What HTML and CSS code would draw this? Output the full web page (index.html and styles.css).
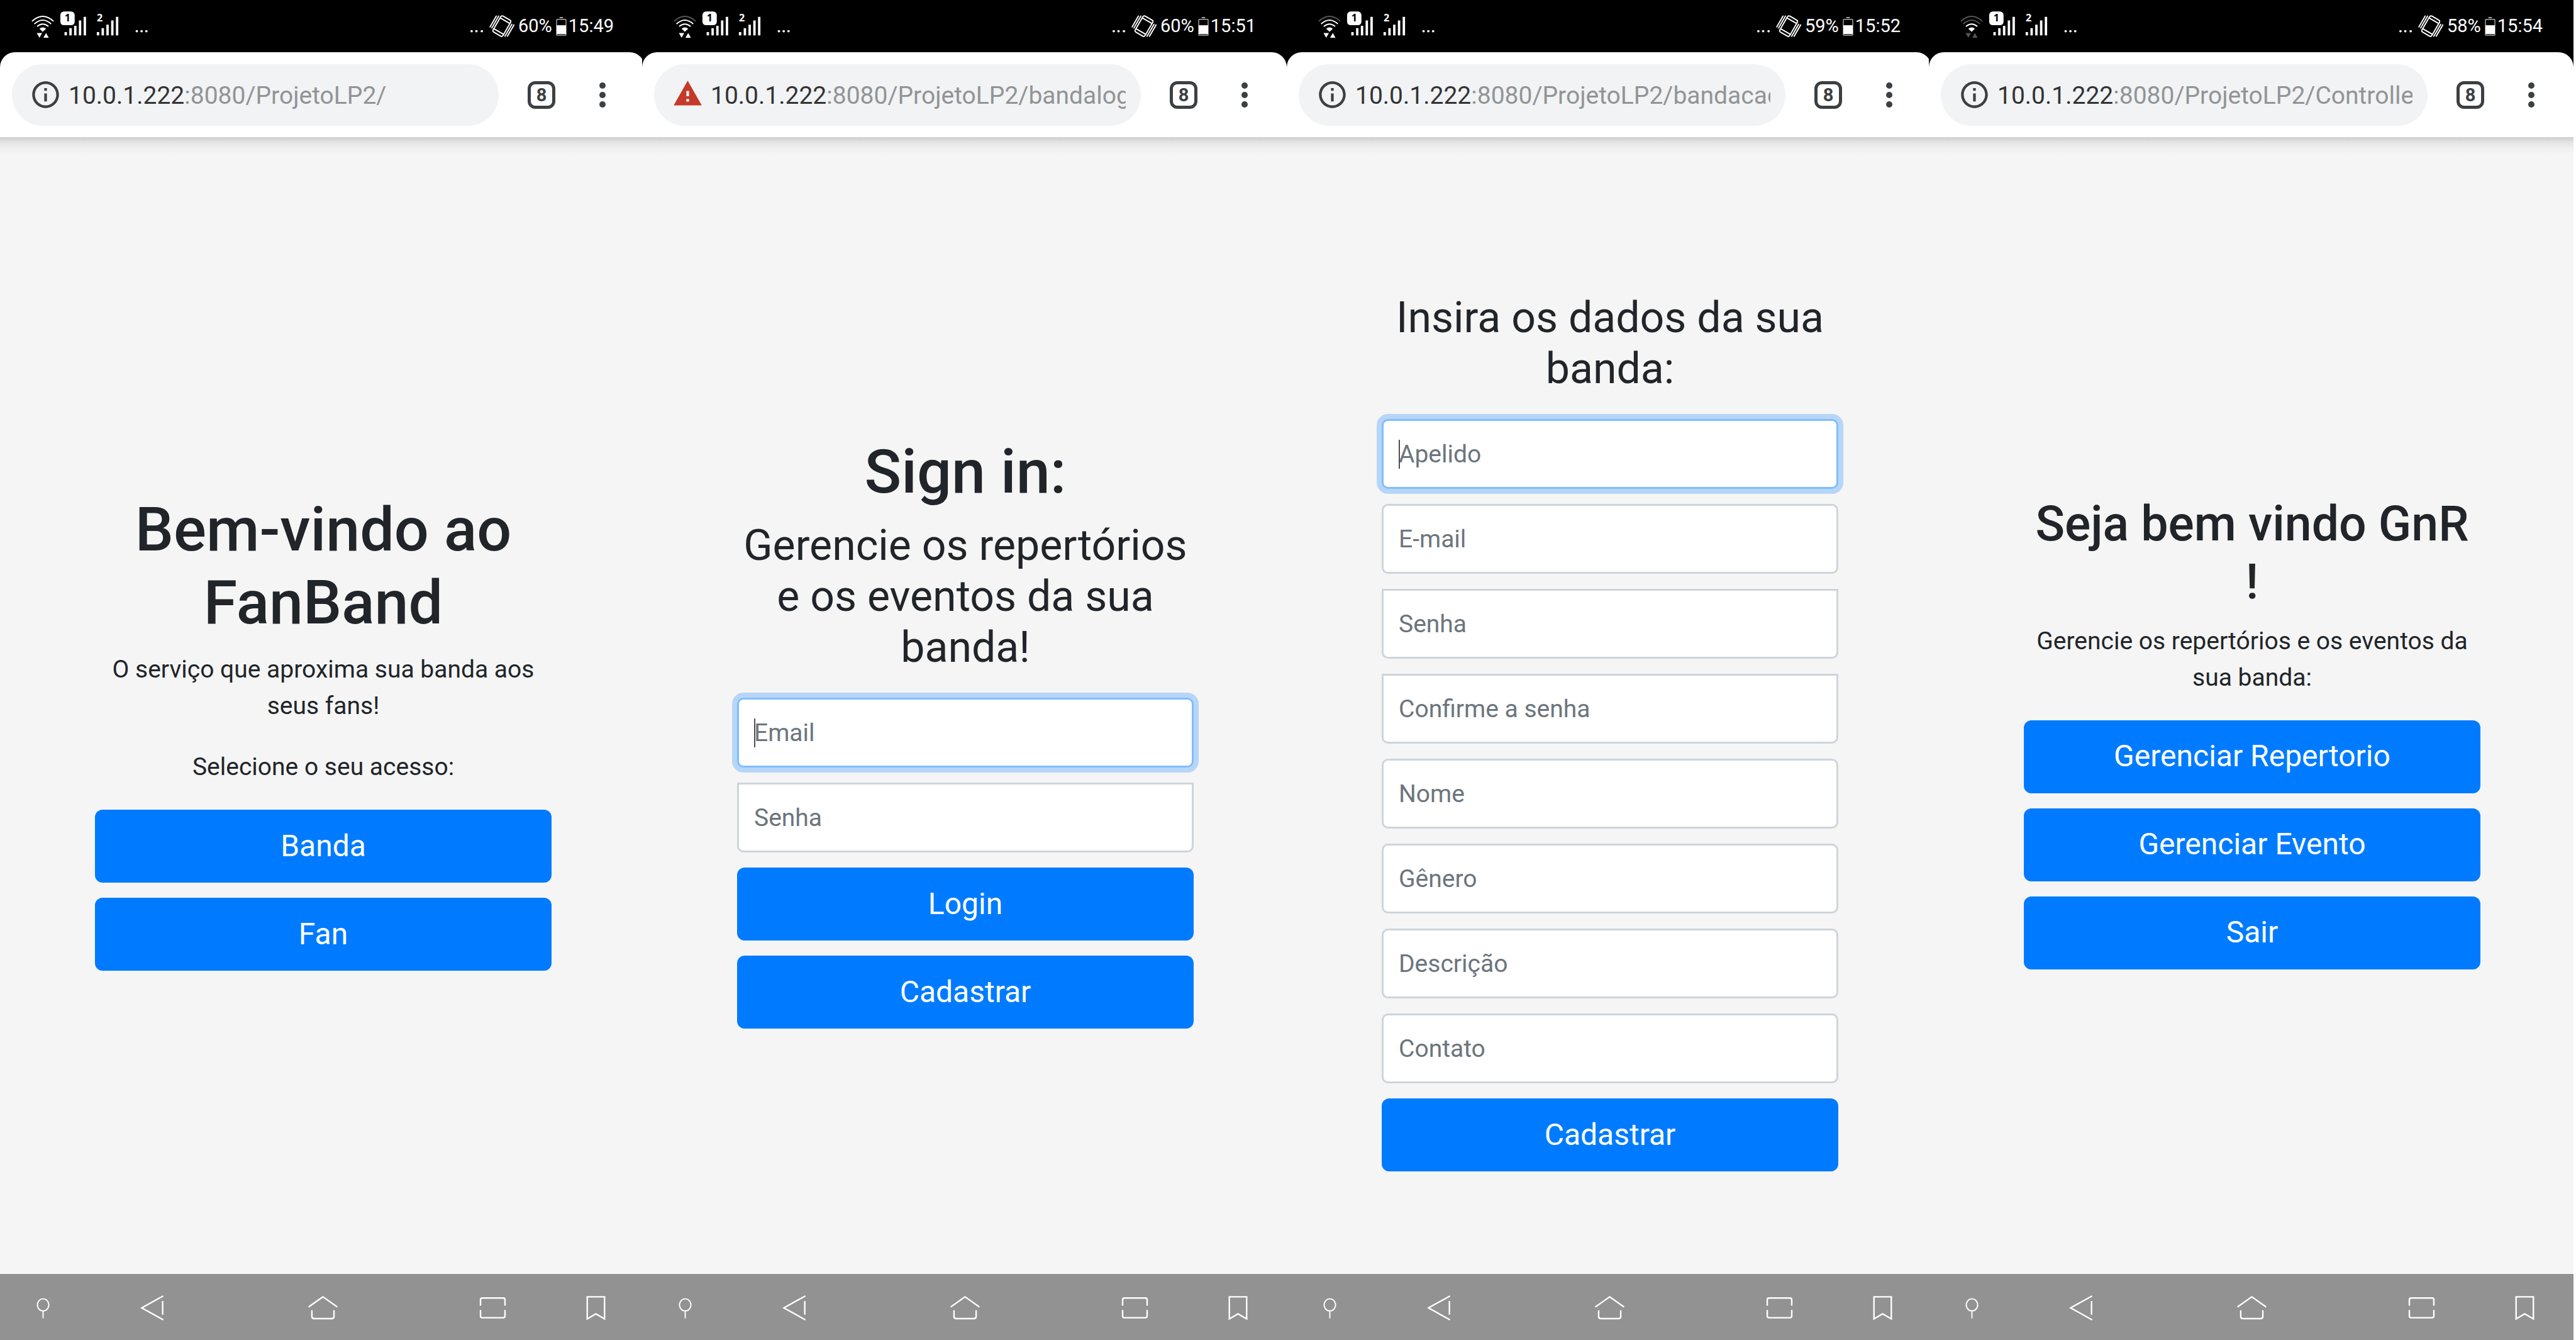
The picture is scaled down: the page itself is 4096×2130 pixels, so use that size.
FILE: index.html
```html
<!DOCTYPE html>
<html lang="pt-BR">
<head>
<meta charset="utf-8">
<title>FanBand</title>
<link rel="stylesheet" href="styles.css">
</head>
<body>
<svg class="sprite" aria-hidden="true">
  <symbol id="signals" viewBox="0 0 260 87">
    <g fill="#fff">
      <rect x="101" y="19" width="24" height="23" rx="6"/>
      <path d="M108 53.5h4V59h-4zM116 47h4v12h-4zM124 43h4v16h-4zM132 34h4v25h-4zM140 28h4v31h-4z"/>
      <path d="M162 53.5h4V59h-4zM170 47h4v12h-4zM178 41h4v18h-4zM186 34h4v25h-4zM194 28h4v31h-4z"/>
      <circle cx="229" cy="52" r="2"/><circle cx="237" cy="52" r="2"/><circle cx="245" cy="52" r="2"/>
    </g>
    <text x="113" y="36" class="sim" fill="#000">1</text>
    <text x="167" y="36" class="sim" fill="#fff">2</text>
  </symbol>
  <symbol id="wifi" viewBox="0 0 44 87">
    <g fill="none" stroke="#fff" stroke-width="2">
      <path class="arc-4" d="M10 35.500Q28 19 46 35.500" transform="translate(-6)"/>
      <path class="arc-3" d="M8 40q14-13 28 0"/>
      <path d="M12.500 44q9.500-8 19 0"/>
    </g>
    <path fill="#fff" d="M16.500 48q5.500-5 11 0L22 53z"/>
    <path class="arrows" d="M12 55h9l-4.500 8zM23 63h9l-4.500-8z"/>
  </symbol>
  <symbol id="more" viewBox="0 0 24 87">
    <g fill="#fff"><circle cx="3" cy="52" r="2"/><circle cx="11" cy="52" r="2"/><circle cx="20" cy="52" r="2"/></g>
  </symbol>
  <symbol id="vibrate" viewBox="0 0 42 40">
    <g transform="translate(21 19.500) rotate(30)" fill="none" stroke="#fff" stroke-width="2" stroke-linecap="round">
      <rect x="-9.500" y="-15.500" width="19" height="31" rx="3"/>
      <path d="M-9.500-10.500h19M-9.500 10.500h19M-13-12v23M-16.500-10v21M13-11v23M16.500-12v22"/>
    </g>
  </symbol>
  <symbol id="battery" viewBox="0 0 18 32">
    <path fill="#aaa" d="M6 0h6v2H6z"/>
    <rect x="1" y="4" width="16" height="27" rx="1" fill="none" stroke="#aaa" stroke-width="1.500"/>
    <path fill="#fff" d="M1 14h16v15H1z"/>
  </symbol>
  <symbol id="info" viewBox="0 0 24 24">
    <path d="M11 7h2v2h-2zm0 4h2v6h-2zm1-9C6.480 2 2 6.480 2 12s4.480 10 10 10 10-4.480 10-10S17.520 2 12 2zm0 18c-4.410 0-8-3.590-8-8s3.590-8 8-8 8 3.590 8 8-3.590 8-8 8z" fill="#3c4043"/>
  </symbol>
  <symbol id="warning" viewBox="0 0 24 24">
    <path fill="#c53929" d="M1.500 20h21L12 1.500z"/>
    <path fill="#f1f3f4" d="M11 9.200h2v4h-2zM11 15.200h2v2h-2z"/>
  </symbol>
  <symbol id="dots" viewBox="0 0 12 42">
    <g fill="#3c4043"><circle cx="6" cy="6" r="5"/><circle cx="6" cy="21" r="5"/><circle cx="6" cy="36" r="5"/></g>
  </symbol>
  <symbol id="pin" viewBox="0 0 60 110">
    <path fill="none" stroke="#fff" stroke-width="2" d="M30 41.500a9.500 10 0 1 0 .1 0zM30 62v12"/>
  </symbol>
  <symbol id="back" viewBox="0 0 60 110">
    <path fill="none" stroke="#fff" stroke-width="2.500" d="M48 36.500L12 56.500l36 20M47 45v23"/>
  </symbol>
  <symbol id="home" viewBox="0 0 60 110">
    <path fill="none" stroke="#fff" stroke-width="2.500" d="M6 55l24-17 24 17M11.500 60.500V71q0 3.500 4 3.500h29q4 0 4-3.500V60.500"/>
  </symbol>
  <symbol id="recents" viewBox="0 0 60 110">
    <path fill="none" stroke="#fff" stroke-width="2.500" d="M9.500 53V43q0-3 3-3h35q3 0 3 3v10M9.500 60v10q0 3 3 3h35q3 0 3-3V60"/>
  </symbol>
  <symbol id="bookmark" viewBox="0 0 60 110">
    <path fill="none" stroke="#fff" stroke-width="2.500" d="M15.500 38h29v37L30 66.500 15.500 75z"/>
  </symbol>
</svg>

<main class="gallery">
  <section class="phone phone--cropped">
    <div class="screen">
      <header class="status">
        <svg class="wifi"><use href="#wifi"/></svg><svg class="signals"><use href="#signals"/></svg>
        <div class="status-end"><svg class="more"><use href="#more"/></svg><svg class="vibrate"><use href="#vibrate"/></svg><span class="percent">60%</span><svg class="battery"><use href="#battery"/></svg><time>15:49</time></div>
      </header>
      <div class="toolbar-back"><div class="toolbar">
        <div class="address"><svg class="site-icon"><use href="#info"/></svg><span class="url">10.0.1.222<span class="path">:8080/ProjetoLP2/</span></span></div>
        <button class="tabs" type="button" aria-label="Abas">8</button>
        <button class="menu" type="button" aria-label="Menu"><svg><use href="#dots"/></svg></button>
      </div></div>
      <div class="page">
        <h1>Bem-vindo ao FanBand</h1>
        <p>O serviço que aproxima sua banda aos seus fans!</p>
        <p>Selecione o seu acesso:</p>
        <div class="stack">
          <button class="btn" type="button">Banda</button>
          <button class="btn" type="button">Fan</button>
        </div>
      </div>
      <nav class="navbar">
        <button type="button" aria-label="Fixar"><svg><use href="#pin"/></svg></button>
        <button type="button" aria-label="Voltar"><svg><use href="#back"/></svg></button>
        <button type="button" aria-label="Início"><svg><use href="#home"/></svg></button>
        <button type="button" aria-label="Recentes"><svg><use href="#recents"/></svg></button>
        <button type="button" aria-label="Favoritos"><svg><use href="#bookmark"/></svg></button>
      </nav>
    </div>
  </section>

  <section class="phone">
    <div class="screen">
      <header class="status">
        <svg class="wifi wifi--good"><use href="#wifi"/></svg><svg class="signals"><use href="#signals"/></svg>
        <div class="status-end"><svg class="more"><use href="#more"/></svg><svg class="vibrate"><use href="#vibrate"/></svg><span class="percent">60%</span><svg class="battery"><use href="#battery"/></svg><time>15:51</time></div>
      </header>
      <div class="toolbar-back"><div class="toolbar">
        <div class="address"><svg class="site-icon"><use href="#warning"/></svg><span class="url">10.0.1.222<span class="path">:8080/ProjetoLP2/bandalog</span></span></div>
        <button class="tabs" type="button" aria-label="Abas">8</button>
        <button class="menu" type="button" aria-label="Menu"><svg><use href="#dots"/></svg></button>
      </div></div>
      <form class="page">
        <h1>Sign in:</h1>
        <h3>Gerencie os repertórios e os eventos da sua banda!</h3>
        <div class="stack">
          <div class="field field--focus"><input type="email" placeholder="Email" aria-label="Email"><span class="caret"></span></div>
          <div class="field"><input type="password" placeholder="Senha" aria-label="Senha"></div>
          <button class="btn" type="button">Login</button>
          <button class="btn" type="button">Cadastrar</button>
        </div>
      </form>
      <nav class="navbar">
        <button type="button" aria-label="Fixar"><svg><use href="#pin"/></svg></button>
        <button type="button" aria-label="Voltar"><svg><use href="#back"/></svg></button>
        <button type="button" aria-label="Início"><svg><use href="#home"/></svg></button>
        <button type="button" aria-label="Recentes"><svg><use href="#recents"/></svg></button>
        <button type="button" aria-label="Favoritos"><svg><use href="#bookmark"/></svg></button>
      </nav>
    </div>
  </section>

  <section class="phone phone--cropped">
    <div class="screen">
      <header class="status">
        <svg class="wifi wifi--good"><use href="#wifi"/></svg><svg class="signals"><use href="#signals"/></svg>
        <div class="status-end"><svg class="more"><use href="#more"/></svg><svg class="vibrate"><use href="#vibrate"/></svg><span class="percent">59%</span><svg class="battery"><use href="#battery"/></svg><time>15:52</time></div>
      </header>
      <div class="toolbar-back"><div class="toolbar">
        <div class="address"><svg class="site-icon"><use href="#info"/></svg><span class="url">10.0.1.222<span class="path">:8080/ProjetoLP2/bandacad</span></span></div>
        <button class="tabs" type="button" aria-label="Abas">8</button>
        <button class="menu" type="button" aria-label="Menu"><svg><use href="#dots"/></svg></button>
      </div></div>
      <form class="page">
        <h3>Insira os dados da sua banda:</h3>
        <div class="stack">
          <div class="field field--focus"><input type="text" placeholder="Apelido" aria-label="Apelido"><span class="caret"></span></div>
          <div class="field"><input type="email" placeholder="E-mail" aria-label="E-mail"></div>
          <div class="field"><input type="password" placeholder="Senha" aria-label="Senha"></div>
          <div class="field"><input type="password" placeholder="Confirme a senha" aria-label="Confirme a senha"></div>
          <div class="field"><input type="text" placeholder="Nome" aria-label="Nome"></div>
          <div class="field"><input type="text" placeholder="Gênero" aria-label="Gênero"></div>
          <div class="field"><input type="text" placeholder="Descrição" aria-label="Descrição"></div>
          <div class="field"><input type="text" placeholder="Contato" aria-label="Contato"></div>
          <button class="btn" type="button">Cadastrar</button>
        </div>
      </form>
      <nav class="navbar">
        <button type="button" aria-label="Fixar"><svg><use href="#pin"/></svg></button>
        <button type="button" aria-label="Voltar"><svg><use href="#back"/></svg></button>
        <button type="button" aria-label="Início"><svg><use href="#home"/></svg></button>
        <button type="button" aria-label="Recentes"><svg><use href="#recents"/></svg></button>
        <button type="button" aria-label="Favoritos"><svg><use href="#bookmark"/></svg></button>
      </nav>
    </div>
  </section>

  <section class="phone">
    <div class="screen">
      <header class="status">
        <svg class="wifi wifi--good wifi--idle"><use href="#wifi"/></svg><svg class="signals"><use href="#signals"/></svg>
        <div class="status-end"><svg class="more"><use href="#more"/></svg><svg class="vibrate"><use href="#vibrate"/></svg><span class="percent">58%</span><svg class="battery"><use href="#battery"/></svg><time>15:54</time></div>
      </header>
      <div class="toolbar-back"><div class="toolbar">
        <div class="address"><svg class="site-icon"><use href="#info"/></svg><span class="url">10.0.1.222<span class="path">:8080/ProjetoLP2/Controlle</span></span></div>
        <button class="tabs" type="button" aria-label="Abas">8</button>
        <button class="menu" type="button" aria-label="Menu"><svg><use href="#dots"/></svg></button>
      </div></div>
      <div class="page">
        <h2>Seja bem vindo GnR !</h2>
        <p>Gerencie os repertórios e os eventos da sua banda:</p>
        <div class="stack">
          <button class="btn" type="button">Gerenciar Repertorio</button>
          <button class="btn" type="button">Gerenciar Evento</button>
          <button class="btn" type="button">Sair</button>
        </div>
      </div>
      <nav class="navbar">
        <button type="button" aria-label="Fixar"><svg><use href="#pin"/></svg></button>
        <button type="button" aria-label="Voltar"><svg><use href="#back"/></svg></button>
        <button type="button" aria-label="Início"><svg><use href="#home"/></svg></button>
        <button type="button" aria-label="Recentes"><svg><use href="#recents"/></svg></button>
        <button type="button" aria-label="Favoritos"><svg><use href="#bookmark"/></svg></button>
      </nav>
    </div>
  </section>
</main>
</body>
</html>
```
FILE: styles.css
```css
* { box-sizing: border-box; }

body {
  margin: 0;
  background: #fff;
  color: #212529;
  font-family: Roboto, "Liberation Sans", sans-serif;
  font-size: 39px;
}

button, input { font: inherit; margin: 0; }
button { border: 0; padding: 0; background: none; cursor: pointer; }
svg { display: block; flex: none; }
.sprite { display: none; }

.gallery {
  display: grid;
  grid-template-columns: 1021fr 1025fr 1021fr 1025fr;
  min-height: 100vh;
  padding-right: 4px;
}

.phone { display: grid; min-width: 0; overflow: hidden; }
.screen { display: flex; flex-direction: column; min-width: 0; background: #f5f5f5; }
.phone--cropped .screen { margin-right: -4px; }

/* Android status bar */
.status {
  display: flex;
  align-items: center;
  height: 83px;
  padding: 0 49px 0 47px;
  background: #000;
  color: #fff;
  font-size: 29px;
  line-height: 83px;
}
.wifi { width: 42px; height: 83px; --outer: #fff; --mid: #fff; --arrows: #fff; }
.wifi--good { --outer: #555; }
.wifi--idle { --mid: #555; --arrows: #555; }
.arc-4 { stroke: var(--outer); }
.arc-3 { stroke: var(--mid); }
.arrows { fill: var(--arrows); }
.signals { width: 247px; height: 83px; margin-left: -89px; }
.sim { font-family: "Open Sans", sans-serif; font-size: 17px; font-weight: 700; text-anchor: middle; }
.status-end { display: flex; align-items: center; margin-left: auto; }
.more { width: 23px; height: 83px; margin-right: 8px; }
.vibrate { width: 40px; height: 38px; margin-right: 6px; }
.battery { width: 17px; height: 30px; margin: 0 3px 0 6px; }

/* Browser toolbar */
.toolbar-back { background: #000; }
.toolbar {
  display: flex;
  align-items: center;
  height: 135px;
  padding: 0 50px 0 19px;
  border-radius: 24px 24px 0 0;
  background: #fff;
}
.address {
  display: flex;
  flex: 1;
  align-items: center;
  min-width: 0;
  height: 98px;
  padding: 0 24px 0 28px;
  border-radius: 49px;
  background: #f1f3f4;
}
.site-icon { width: 51px; height: 51px; margin-right: 11px; }
.url {
  flex: 1;
  min-width: 0;
  padding-top: 2px;
  overflow: hidden;
  color: #333;
  font-size: 39px;
  line-height: 60px;
  white-space: nowrap;
}
.path { color: #929496; }
.tabs {
  width: 44px;
  height: 44px;
  margin: 0 58px 0 46px;
  border: 5px solid #3c4043;
  border-radius: 12px;
  color: #3c4043;
  font-size: 29px;
  font-weight: 700;
  line-height: 30px;
}
.menu { width: 34px; }
.menu svg { width: 12px; height: 42px; margin: 0 auto; }

/* Page content */
.page {
  display: flex;
  flex: 1;
  flex-direction: column;
  justify-content: center;
  padding: 84px 148px 0 151px;
  background: linear-gradient(#cdcecf, #e3e3e3 8px, #f0f0f0 18px, #f5f5f5 28px);
  text-align: center;
}
h1, h2, h3, p { margin: 0; }
h1 { margin-bottom: 19px; font-size: 97px; font-weight: 500; line-height: 116px; }
h2 { margin-bottom: 19px; font-size: 77px; font-weight: 500; line-height: 92px; }
h3 { margin-bottom: 39px; font-size: 68px; font-weight: 400; line-height: 81px; }
p { margin-bottom: 39px; line-height: 58px; }

.stack { display: flex; flex-direction: column; gap: 24px; }
.btn {
  height: 116px;
  padding-bottom: 2px;
  border-radius: 12px;
  background: #007bff;
  color: #fff;
  font-size: 48px;
}
.field { position: relative; }
.field input {
  display: block;
  width: 100%;
  height: 111px;
  padding: 0 24px;
  border: 3px solid #ced4da;
  border-radius: 10px;
  outline: 0;
  background: #fff;
  color: #495057;
}
.field input[type="password"] { border-top-left-radius: 0; border-top-right-radius: 0; }
.field input::placeholder { color: #6c757d; opacity: 1; }
.field--focus input { border-color: #80bdff; box-shadow: 0 0 0 8px rgba(0, 123, 255, .25); }
.caret {
  position: absolute;
  top: 33px;
  left: 27px;
  width: 2px;
  height: 46px;
  background: #495057;
}

/* Android navigation bar */
.navbar {
  display: grid;
  grid-template-columns: 136fr 213fr 328fr 213fr 115fr;
  height: 105px;
  padding-right: 20px;
  background: #929292;
}
.navbar svg { width: 57px; height: 105px; margin: 0 auto; }
```
